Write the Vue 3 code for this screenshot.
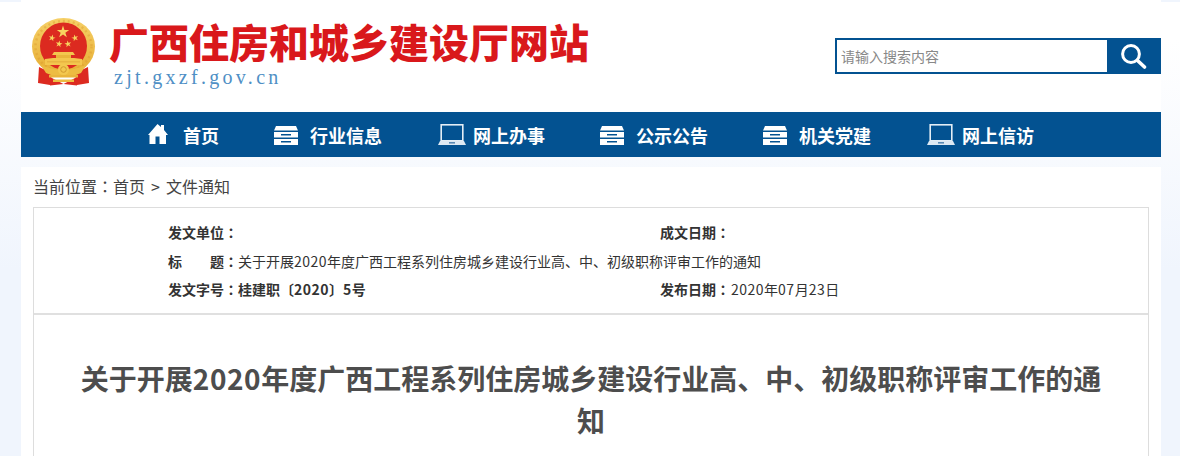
<template>
  <div class="page">
    <div class="wrap">
      <header class="head">
        <div class="brand">
          <svg class="emblem" width="66" height="70" viewBox="0 0 66 70">
            <defs>
              <linearGradient id="gold" x1="0" y1="0" x2="0" y2="1">
                <stop offset="0%" stop-color="#f6d067" />
                <stop offset="100%" stop-color="#e6ad32" />
              </linearGradient>
            </defs>
            <!-- ribbons -->
            <path d="M8 50 L7 66 L19 68 L21 56 Z M57 50 L58 66 L46 68 L44 56 Z" fill="#dc2a20" />
            <path d="M19 60 L32.5 67 L19 68.5 Z M46 60 L32.5 67 L46 68.5 Z" fill="#dc2a20" />
            <!-- wheat ring -->
            <ellipse cx="32.5" cy="29.5" rx="31.5" ry="28.5" fill="url(#gold)" />
            <ellipse cx="32.5" cy="29.5" rx="28" ry="25.5" fill="none" stroke="#d9962a" stroke-width="2.4" stroke-dasharray="2 3" opacity="0.4" />
            <circle cx="32.5" cy="29" r="23.5" fill="#dc2a20" />
            <polygon v-for="(s, i) in stars" :key="i" :points="s" fill="#f7d45f" />
            <!-- gate -->
            <path d="M23 35 H42 L44 38 H21 Z" fill="#f3c64e" />
            <path d="M25 38 H40 V41 H25 Z" fill="#e9b53b" />
            <path d="M22 41 L14 42 V48 H51 V42 L43 41 Z" fill="#f3c64e" />
            <path d="M16 44.5 H49 V45.3 H16 Z" fill="#dfa436" />
            <!-- knot -->
            <path d="M10 48 Q32.5 58 55 48 L50 56 Q32.5 64 15 56 Z" fill="#edbc42" />
            <circle cx="32.5" cy="52.5" r="5.5" fill="#f3c84f" />
            <circle cx="32.5" cy="52.5" r="2.8" fill="none" stroke="#d29a30" stroke-width="1" />
            <path d="M18 58 H47 V60.5 H18 Z" fill="#e9b53b" />
            <path d="M22 62.5 H43 V65 H22 Z" fill="#edbc42" />
          </svg>
          <div class="brand-text">
            <h1>广西住房和城乡建设厅网站</h1>
            <p>zjt.gxzf.gov.cn</p>
          </div>
        </div>
        <div class="search">
          <input type="text" placeholder="请输入搜索内容" />
          <button type="button" aria-label="搜索">
            <svg width="28" height="28" viewBox="0 0 28 28" fill="none" stroke="#fff">
              <circle cx="12" cy="12" r="8.4" stroke-width="3" />
              <path d="M18.5 18.5 L25.5 25" stroke-width="3.6" stroke-linecap="round" />
            </svg>
          </button>
        </div>
      </header>

      <nav class="nav">
        <a v-for="item in navItems" :key="item.label" class="nav-item">
          <span class="nav-icon">
            <svg v-if="item.icon === 'home'" width="20" height="20" viewBox="0 0 20 20" fill="#fff">
              <path d="M9.5 0 L13 3 V1 H16 V6 L20 11 H18 V20 H11.5 V12.5 H7.5 V20 H1.5 V11 H0 Z" />
            </svg>
            <svg v-else-if="item.icon === 'box'" class="icon-box" width="24" height="19" viewBox="0 0 24 19" fill="#fff">
              <path d="M2 0 H22 L24 4.5 H0 Z" />
              <path d="M0 6 H24 V11.5 H0 Z M7 8 V9.5 H17 V8 Z" fill-rule="evenodd" />
              <path d="M0 13 H24 V19 H0 Z M7 15 V16.5 H17 V15 Z" fill-rule="evenodd" />
            </svg>
            <svg v-else class="icon-laptop" width="28" height="21" viewBox="0 0 28 21">
              <rect x="3.2" y="0.8" width="21.6" height="16" fill="none" stroke="#e4eef6" stroke-width="1.6" />
              <path d="M2 17 H26 L28 21 H0 Z" fill="#dde9f3" />
              <rect x="11" y="18" width="6" height="1.6" fill="#5a8ab5" />
            </svg>
          </span>
          {{ item.label }}
        </a>
      </nav>

      <div class="gap-strip"></div>

      <main class="main">
        <div class="crumb">当前位置<span class="colon">：</span>首页<span class="crumb-sep">&gt;</span>文件通知</div>
        <section class="box">
          <div class="meta">
            <div class="meta-row">
              <div class="meta-col"><b>发文单位<span class="colon">：</span></b></div>
              <div class="meta-col"><b>成文日期<span class="colon">：</span></b></div>
            </div>
            <div class="meta-row">
              <div class="meta-col wide">
                <b class="spread"><i>标</i><i>题</i></b><b class="colon">：</b>
                <span>关于开展<span class="num">2020</span>{{ titleRest }}</span>
              </div>
            </div>
            <div class="meta-row">
              <div class="meta-col"><b>发文字号<span class="colon">：</span>桂建职〔<span class="num">2020</span>〕<span class="num">5</span>号</b></div>
              <div class="meta-col"><b>发布日期<span class="colon">：</span></b><span class="date"><span class="num">2020</span>年<span class="num">07</span>月<span class="num">23</span>日</span></div>
            </div>
          </div>
          <h2 class="title">关于开展<span class="num">2020</span>{{ titleRest }}</h2>
        </section>
      </main>
    </div>
  </div>
</template>

<script setup>
const titleRest = '年度广西工程系列住房城乡建设行业高、中、初级职称评审工作的通知'

const navItems = [
  { label: '首页', icon: 'home' },
  { label: '行业信息', icon: 'box' },
  { label: '网上办事', icon: 'laptop' },
  { label: '公示公告', icon: 'box' },
  { label: '机关党建', icon: 'box' },
  { label: '网上信访', icon: 'laptop' }
]

function star(cx, cy, r, rot) {
  const pts = []
  for (let i = 0; i < 10; i++) {
    const rad = i % 2 ? r * 0.38 : r
    const a = (rot - 90 + i * 36) * Math.PI / 180
    pts.push((cx + rad * Math.cos(a)).toFixed(2) + ',' + (cy + rad * Math.sin(a)).toFixed(2))
  }
  return pts.join(' ')
}

const stars = [
  star(32, 15, 6.5, 0),
  star(21, 21, 3.6, 15),
  star(44, 21, 3.6, -15),
  star(28, 27, 3.6, 10),
  star(37, 27, 3.6, -10)
]
</script>

<style scoped>
.page {
  width: 1180px;
  height: 456px;
  overflow: hidden;
  background: linear-gradient(180deg, #f0f5fd 0, #f0f5fd 2px, #fff 2px, #fff 40px, #f0f5fd 270px);
  font-family: "Noto Sans CJK SC", "Liberation Sans", sans-serif;
}
.wrap {
  width: 1140px;
  margin: 0 auto;
  transform: translateX(1px);
}
.head {
  height: 112px;
  background: #fff;
  display: flex;
  justify-content: space-between;
  align-items: flex-start;
}
.brand {
  display: flex;
  padding: 17px 0 0 10px;
}
.emblem {
  flex: none;
}
.brand-text {
  margin: -1px 0 0 13px;
}
h1 {
  margin: 0 0 0 -1px;
  font-size: 40px;
  line-height: 50px;
  font-weight: 900;
  color: #d9181b;
}
.brand-text p {
  margin: 0 0 0 4px;
  font-family: "Liberation Serif", serif;
  font-size: 20px;
  line-height: 23px;
  letter-spacing: 3.3px;
  color: #4f8fc5;
}
.search {
  display: flex;
  width: 326px;
  height: 36px;
  margin-top: 38px;
  box-sizing: border-box;
  border: 2px solid #035291;
}
.search input {
  flex: 1;
  min-width: 0;
  border: 0;
  outline: 0;
  padding: 0 4px;
  font-family: inherit;
  font-size: 14px;
  background: #fff;
}
.search input::placeholder {
  color: #888;
}
.search button {
  width: 52px;
  border: 0;
  padding: 0;
  background: #035291;
  display: flex;
  align-items: center;
  justify-content: center;
}
.nav {
  height: 45px;
  background: #035291;
  display: flex;
  justify-content: center;
  align-items: flex-start;
  gap: 56px;
}
.nav-item {
  display: flex;
  align-items: center;
  color: #fff;
  font-size: 18px;
  font-weight: 700;
  line-height: 47px;
}
.nav-icon {
  width: 35px;
  height: 21px;
  display: block;
  margin-top: -2px;
}
.nav-icon svg {
  display: block;
}
.icon-box {
  margin: 2px 0 0 -1px;
}
.gap-strip {
  height: 10px;
}
.main {
  background: #fff;
  padding: 0 12px;
}
.crumb {
  height: 40px;
  line-height: 38px;
  font-size: 16px;
  color: #444;
}
.crumb-sep {
  margin: 0 6px;
}
.colon {
  font-family: "Noto Sans CJK TC", sans-serif;
}
.num {
  letter-spacing: 0.02em;
}
.box {
  border: 1px solid #ddd;
  height: 400px;
}
.meta {
  height: 107px;
  border-bottom: 2px solid #e0e0e0;
  padding: 10px 0 0 134px;
  box-sizing: border-box;
  font-size: 14px;
  color: #333;
}
.meta .num {
  letter-spacing: 0.5px;
}
.date {
  margin-left: 1px;
}
.meta-row {
  display: flex;
  height: 28.5px;
  line-height: 28.5px;
}
.meta-col {
  width: 492px;
  flex: none;
}
.meta-col.wide {
  width: auto;
  display: flex;
}
.meta-col b {
  font-weight: 700;
}
.spread {
  display: flex;
  justify-content: space-between;
  width: 56px;
}
.spread i {
  font-style: normal;
}
.title {
  margin: 42px 0 0;
  padding: 0 40px;
  text-align: center;
  font-size: 28px;
  line-height: 42px;
  font-weight: 700;
  color: #4d4d4d;
}
</style>

<style>
html, body {
  margin: 0;
  background: #f0f5fd;
}
</style>
